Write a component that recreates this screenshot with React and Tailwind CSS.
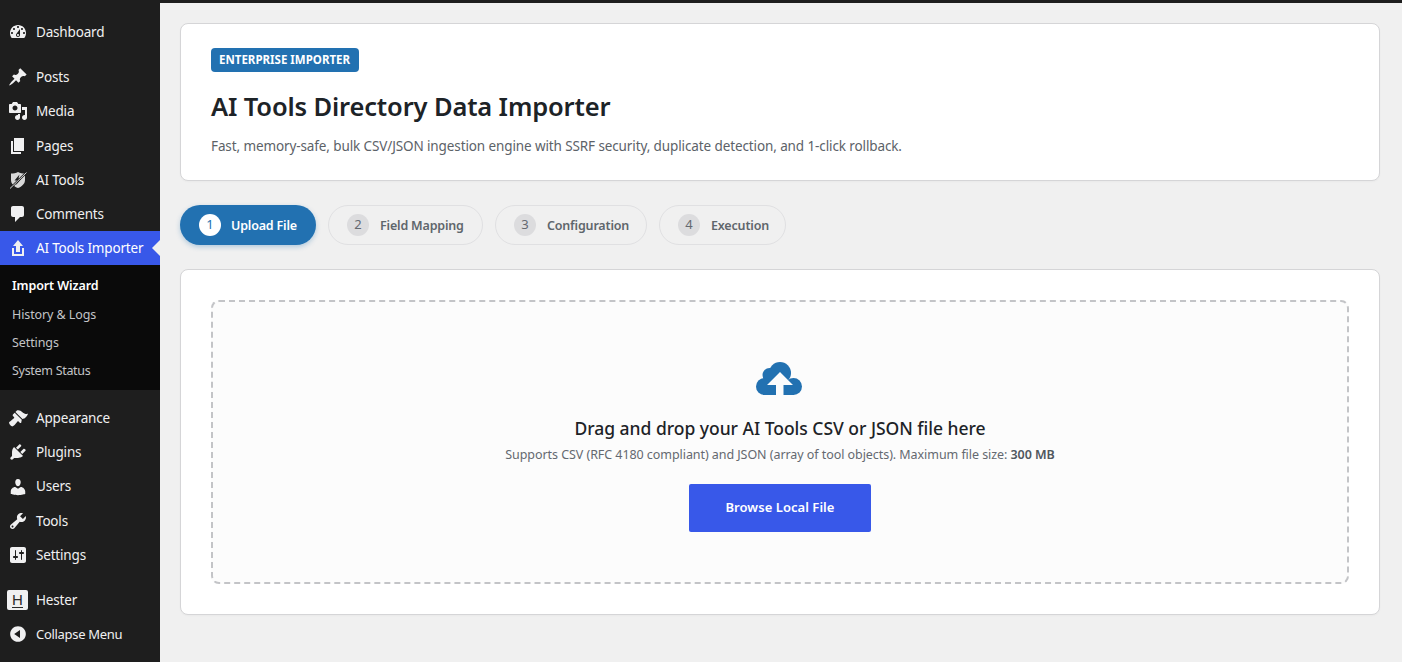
const dashicons = {
  dashboard: 'M3.76 16h12.48c1.1-1.37 1.76-3.11 1.76-5 0-4.42-3.58-8-8-8s-8 3.58-8 8c0 1.89.66 3.63 1.76 5zM10 4c.55 0 1 .45 1 1s-.45 1-1 1-1-.45-1-1 .45-1 1-1zM6 6c.55 0 1 .45 1 1s-.45 1-1 1-1-.45-1-1 .45-1 1-1zm8 0c.55 0 1 .45 1 1s-.45 1-1 1-1-.45-1-1 .45-1 1-1zm-5.37 5.55L12 7v6c0 1.1-.9 2-2 2s-2-.9-2-2c0-.57.24-1.08.63-1.45zM4 10c.55 0 1 .45 1 1s-.45 1-1 1-1-.45-1-1 .45-1 1-1zm12 0c.55 0 1 .45 1 1s-.45 1-1 1-1-.45-1-1 .45-1 1-1zm-5 3c0-.55-.45-1-1-1s-1 .45-1 1 .45 1 1 1 1-.45 1-1z',
  post: 'M10.44 3.02l1.82-1.82 6.36 6.35-1.83 1.82c-1.05-.68-2.48-.57-3.41.36l-.75.75c-.92.93-1.04 2.35-.35 3.41l-1.83 1.82-2.41-2.41-2.8 2.79c-.42.42-3.38 2.71-3.8 2.29s1.86-3.39 2.28-3.81l2.79-2.79L4.1 9.36l1.83-1.82c1.05.69 2.48.57 3.41-.36l.75-.75c.93-.92 1.04-2.35.35-3.41z',
  media: 'M13 11V4c0-.55-.45-1-1-1h-1.67L9 1H5L3.67 3H2c-.55 0-1 .45-1 1v7c0 .55.45 1 1 1h10c.55 0 1-.45 1-1zM7 4.500c1.38 0 2.500 1.120 2.500 2.500S8.380 9.500 7 9.500 4.500 8.380 4.500 7 5.620 4.500 7 4.500zM14 6h5v10.500c0 1.380-1.120 2.500-2.500 2.500S14 17.880 14 16.500s1.120-2.500 2.500-2.500c.17 0 .34.02.5.05V9h-3V6zm-4 8.050V13h2v3.500c0 1.380-1.120 2.500-2.500 2.500S7 17.880 7 16.500 8.120 14 9.500 14c.17 0 .34.02.5.05z',
  page: 'M6 15V2h10v13H6zm-1 1h8v2H3V5h2v11z',
  comment: 'M5 2h9c1.1 0 2 .9 2 2v7c0 1.1-.9 2-2 2h-2l-5 5v-5H5c-1.1 0-2-.9-2-2V4c0-1.1.9-2 2-2z',
  upload: 'M8 14V8H5l5-6 5 6h-3v6H8zm-2 2v-6H4v8h12.01v-8H14v6H6z',
  brush: 'M14.48 11.06L7.41 3.99l1.5-1.5c.5-.56 2.3-.47 3.51.32 1.21.8 1.43 1.28 2.91 2.1 1.18.64 2.45 1.26 4.67.85-.5 1.6-1.9 3.3-3.2 4.5zm-.71.71L6.7 4.7 4.93 6.47c-.39.39-.39 1.02 0 1.41l1.06 1.06c.39.39.39 1.03 0 1.42-.6.6-1.43 1.11-2.21 1.69-.35.26-.7.53-1.01.84C1.43 13.23 1 14.55 1 14.55s.6 3.2 3.4 3.9c0 0 1.3-.5 2.4-1.6.3-.31.58-.66.84-1.01.58-.78 1.09-1.61 1.69-2.21.39-.39 1.03-.39 1.42 0l1.06 1.06c.39.39 1.02.39 1.41 0z',
  plugin: 'M13.11 4.36L9.87 7.6 8 5.73l3.24-3.24c.35-.34 1.05-.2 1.56.32.52.51.66 1.21.31 1.55zm-8 1.77l.91-1.12 9.01 9.01-1.19.84c-.71.71-2.63 1.16-3.82 1.16H6.14L4.9 17.26c-.59.59-1.54.59-2.12 0-.59-.58-.59-1.53 0-2.12l1.24-1.24v-3.88c0-1.13.4-3.19 1.09-3.89zm7.26 3.97l3.24-3.24c.34-.35 1.04-.21 1.55.31.52.51.66 1.21.31 1.55l-3.24 3.25z',
  users: 'M10 9.25c-2.27 0-2.73-3.44-2.73-3.44C7 4.02 7.82 2 9.97 2c2.16 0 2.98 2.02 2.71 3.81 0 0-.41 3.44-2.68 3.44zm0 2.57L12.72 10c2.39 0 4.52 2.33 4.52 4.53v2.49s-3.65 1.13-7.24 1.13c-3.65 0-7.24-1.13-7.24-1.13v-2.49c0-2.25 1.94-4.48 4.47-4.48z',
  tools: 'M16.68 9.77c-1.34 1.34-3.3 1.67-4.95.99l-5.41 6.52c-.99.99-2.59.99-3.58 0s-.99-2.59 0-3.57l6.52-5.42c-.68-1.65-.35-3.61.99-4.95 1.28-1.28 3.12-1.62 4.72-1.06l-2.89 2.89 2.82 2.82 2.86-2.87c.53 1.58.18 3.39-1.08 4.65zM3.81 16.21c.4.39 1.04.39 1.43 0 .4-.4.4-1.04 0-1.43-.39-.4-1.03-.4-1.43 0-.39.39-.39 1.03 0 1.43z',
  settings: 'M18 16V4c0-1.1-.9-2-2-2H4c-1.1 0-2 .9-2 2v12c0 1.1.9 2 2 2h12c1.1 0 2-.9 2-2zM8 11h1c.55 0 1 .45 1 1s-.45 1-1 1H8v1.5c0 .28-.22.5-.5.5s-.5-.22-.5-.5V13H6c-.55 0-1-.45-1-1s.45-1 1-1h1V5.5c0-.28.22-.5.5-.5s.5.22.5.5V11zm5-2h-1c-.55 0-1-.45-1-1s.45-1 1-1h1V5.5c0-.28.22-.5.5-.5s.5.22.5.5V7h1c.55 0 1 .45 1 1s-.45 1-1 1h-1v5.5c0 .28-.22.5-.5.5s-.5-.22-.5-.5V9z',
  collapse: 'M10 2.16c4.33 0 7.84 3.51 7.84 7.84s-3.51 7.84-7.84 7.84S2.16 14.33 2.16 10 5.71 2.16 10 2.16zm2 11.72V6.12L6.18 9.97z',
};

function Dash({ name }) {
  return (
    <svg viewBox="0 0 20 20" className="w-5 h-5 fill-[#f0f0f1]">
      <path d={dashicons[name]} />
    </svg>
  );
}

// shield with a bolt and a slash through it, AI Tools post type
function ShieldIcon() {
  return (
    <svg viewBox="0 0 20 20" className="w-5 h-5">
      <path d="M10 2c2 1.200 4.500 1.500 7 1.500V10c0 3.800-3 6.500-7 8-4-1.500-7-4.200-7-8V3.500C5.500 3.500 8 3.200 10 2z" fill="#d8d8d8" />
      <path d="M11.500 4.500L6.500 10.500h3l-1.500 4.500 5.500-6.500h-3z" fill="#1e1e1e" />
      <path d="M2 18.500L18.500 2.500" stroke="#1e1e1e" strokeWidth="2.200" />
      <path d="M2 18.500L18.500 2.500" stroke="#e8e8e8" strokeWidth="0.900" />
    </svg>
  );
}

function MenuItem({ icon, label, tight }) {
  return (
    <div className="flex items-center h-[34.2px] text-[#f0f0f1]">
      <div className="w-9 flex justify-center pr-[1px]">{icon}</div>
      <span className={tight ? 'text-[13px] tracking-[-0.3px]' : 'text-[13.5px] tracking-[-0.18px]'}>{label}</span>
    </div>
  );
}

function Step({ n, label, active, width }) {
  return (
    <div
      className={
        active
          ? `flex items-center gap-[10px] h-10 pl-[19px] rounded-full bg-[#2271b1] text-white shadow-[0_2px_5px_rgba(34,113,177,0.3)] ${width}`
          : `flex items-center gap-[11px] h-10 pl-[18px] rounded-full border border-[#e0e0e2] text-[#5f666c] ${width}`
      }
    >
      <span
        className={
          active
            ? 'w-[22px] h-[22px] rounded-full bg-white text-[#2271b1] flex items-center justify-center text-[13px]'
            : 'w-[22px] h-[22px] rounded-full bg-[#dcdcde] text-[#646970] flex items-center justify-center text-[13px]'
        }
      >
        {n}
      </span>
      <span className="pt-[2px] text-[12.5px] font-semibold tracking-[-0.18px]">{label}</span>
    </div>
  );
}

export default function App() {
  return (
    <div className="flex flex-col h-[662px] overflow-hidden bg-[#f0f0f0] font-['Noto_Sans','Open_Sans',sans-serif]">
      <div className="h-[3px] bg-[#1e1e1e] shrink-0"></div>
      <div className="flex flex-1 min-h-0">
        {/* sidebar */}
        <aside className="w-40 shrink-0 bg-[#1e1e1e] pt-3">
          <MenuItem icon={<Dash name="dashboard" />} label="Dashboard" />
          <div className="h-[11px]"></div>
          <MenuItem icon={<Dash name="post" />} label="Posts" />
          <MenuItem icon={<Dash name="media" />} label="Media" />
          <MenuItem icon={<Dash name="page" />} label="Pages" />
          <MenuItem icon={<ShieldIcon />} label="AI Tools" />
          <MenuItem icon={<Dash name="comment" />} label="Comments" />

          <div className="relative flex items-center h-[34px] bg-[#3858e9] text-white">
            <div className="w-9 flex justify-center pr-[1px]"><Dash name="upload" /></div>
            <span className="text-[13.5px] tracking-[-0.18px]">AI Tools Importer</span>
            <span className="absolute right-0 top-[9px] border-y-[8px] border-y-transparent border-r-[8px] border-r-[#f0f0f0]"></span>
          </div>
          <div className="bg-[#0a0a0a] h-[125px] pt-[7px] pl-3 text-[12.5px] tracking-[-0.1px] text-[#c3c4c7]">
            <div className="h-[28px] flex items-center font-semibold text-white">Import Wizard</div>
            <div className="h-[28px] mt-[1px] flex items-center">History &amp; Logs</div>
            <div className="h-[28px] flex items-center">Settings</div>
            <div className="h-[28px] flex items-center tracking-[-0.3px]">System Status</div>
          </div>

          <div className="h-[11px]"></div>
          <MenuItem icon={<Dash name="brush" />} label="Appearance" />
          <MenuItem icon={<Dash name="plugin" />} label="Plugins" />
          <MenuItem icon={<Dash name="users" />} label="Users" />
          <MenuItem icon={<Dash name="tools" />} label="Tools" />
          <MenuItem icon={<Dash name="settings" />} label="Settings" />
          <div className="h-[11px]"></div>
          <MenuItem
            icon={
              <span className="w-[21px] h-5 rounded-[2px] bg-[#f0f0f1] text-[#2a2a2a] flex items-center justify-center">
                <span className="border-b border-[#2a2a2a] text-[15px] leading-[15px] font-['Liberation_Sans',sans-serif]">H</span>
              </span>
            }
            label="Hester"
          />
          <MenuItem icon={<Dash name="collapse" />} label="Collapse Menu" tight />
        </aside>

        {/* main */}
        <main className="flex-1 min-w-0 pl-5 pr-[22px] pt-5">
          <section className="h-[158px] bg-white border border-[#d5d5d7] rounded-lg pt-6 px-[30px] shadow-[0_1px_2px_rgba(0,0,0,0.03)]">
            <div className="flex items-center w-[148px] h-6 pl-2 rounded-[4px] bg-[#2271b1] text-white text-[11.5px] font-bold whitespace-nowrap">
              ENTERPRISE IMPORTER
            </div>
            <h1 className="mt-4 text-[25.5px] leading-[36px] font-semibold tracking-[-0.15px] text-[#1d2327]">
              AI Tools Directory Data Importer
            </h1>
            <p className="mt-3 text-[13.5px] leading-5 tracking-[-0.11px] text-[#5c6268]">
              Fast, memory-safe, bulk CSV/JSON ingestion engine with SSRF security, duplicate detection, and 1-click rollback.
            </p>
          </section>

          <div className="flex gap-3 mt-6">
            <Step n="1" label="Upload File" active width="w-[136px]" />
            <Step n="2" label="Field Mapping" width="w-[155px]" />
            <Step n="3" label="Configuration" width="w-[152px]" />
            <Step n="4" label="Execution" width="w-[127px]" />
          </div>

          <section className="mt-6 h-[346px] bg-white border border-[#d5d5d7] rounded-lg p-[30px] shadow-[0_1px_2px_rgba(0,0,0,0.03)]">
            <div className="h-[284px] border-2 border-dashed border-[#c3c4c7] rounded-lg bg-[#fcfcfc] flex flex-col items-center pt-[60px]">
              <svg viewBox="0 0 46 33" className="w-[46px] h-[33px] mr-[2px]">
                <g fill="#2271b1">
                  <circle cx="24" cy="11" r="11" />
                  <circle cx="13.500" cy="13" r="7" />
                  <circle cx="8.500" cy="24.500" r="8.500" />
                  <circle cx="37.500" cy="24.500" r="8.500" />
                  <rect x="8" y="18" width="30" height="15" />
                </g>
                <path d="M24 10L37 23H27.500V33H20V23H11z" fill="#fcfcfc" />
              </svg>
              <h2 className="mt-[21px] text-[17.5px] leading-6 font-medium tracking-[-0.02px] text-[#1d2327]">
                Drag and drop your AI Tools CSV or JSON file here
              </h2>
              <p className="mt-[5px] text-[12.5px] leading-5 tracking-[-0.06px] text-[#646970]">
                Supports CSV (RFC 4180 compliant) and JSON (array of tool objects). Maximum file size: <strong className="font-semibold text-[#50575e]">300 MB</strong>
              </p>
              <button className="mt-[19px] w-[182px] h-12 rounded-[2px] bg-[#3858e9] text-white text-[13px] font-semibold tracking-[0.05px]">
                Browse Local File
              </button>
            </div>
          </section>
        </main>
      </div>
    </div>
  );
}
